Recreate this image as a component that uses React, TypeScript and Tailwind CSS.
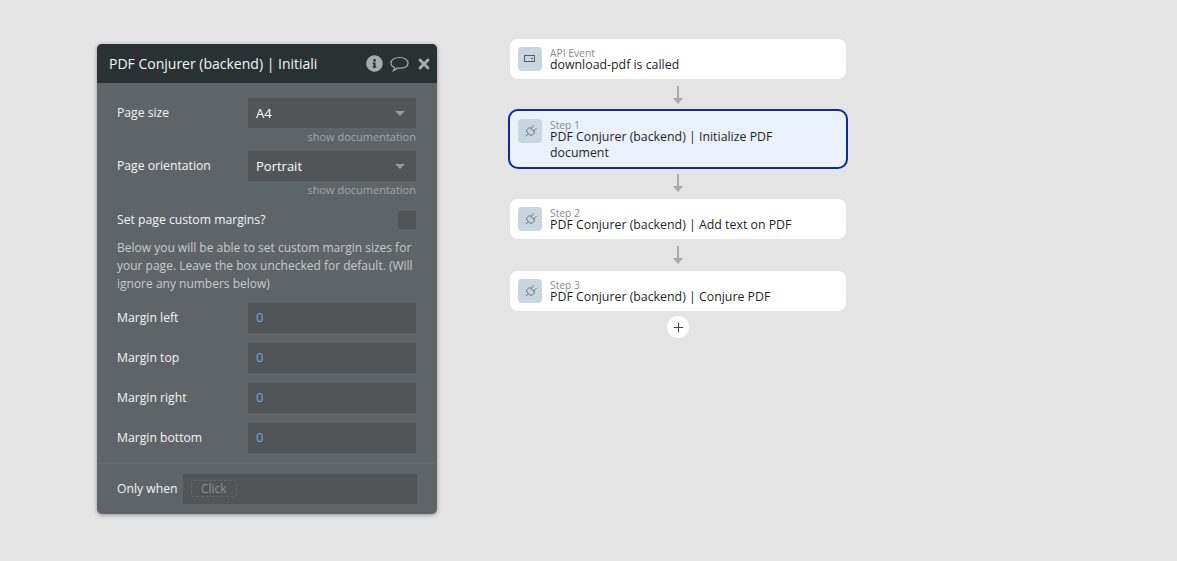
import { Plug, Plus } from "lucide-react";
import { FaInfoCircle, FaTimes } from "react-icons/fa";

const field = "h-[30px] w-[168px] bg-[#515558]";
const label = "text-[12.2px] font-medium text-[#f4f5f5]";
const docs = "h-[23px] pt-[2px] text-right text-[11px] leading-[14px] text-[#a3a7aa]";

function Dropdown({ value }: { value: string }) {
  return (
    <div className={`${field} flex items-center justify-between pl-2 pr-[11px] pt-px text-[13px] text-white`}>
      <span>{value}</span>
      <span className="h-0 w-0 border-x-[5px] border-t-[5px] border-x-transparent border-t-[#989b9e]" />
    </div>
  );
}

function MarginRow({ text }: { text: string }) {
  return (
    <div className="flex items-center justify-between">
      <span className={label}>{text}</span>
      <div className={`${field} flex items-center pl-2 text-[13px] text-[#6fa8dc]`}>0</div>
    </div>
  );
}

function Arrow() {
  return (
    <div className="flex h-8 items-center justify-center">
      <svg width="10" height="18" viewBox="0 0 10 18" className="text-[#a9a9a9]">
        <path d="M5 0v13" stroke="currentColor" strokeWidth="2" fill="none" />
        <path d="M0 12h10l-5 6z" fill="currentColor" />
      </svg>
    </div>
  );
}

function StepIcon({ api }: { api?: boolean }) {
  return (
    <div className="flex h-6 w-6 shrink-0 items-center justify-center rounded-[4px] bg-[#c9d6e2] text-[#52595f]">
      {api ? (
        <svg width="12" height="8" viewBox="0 0 12 8" fill="none" stroke="currentColor">
          <rect x="0.5" y="0.5" width="10" height="6" />
          <path d="M7 3.5h2" />
        </svg>
      ) : (
        <Plug size={15} strokeWidth={1.2} className="rotate-45" />
      )}
    </div>
  );
}

function Card({
  kicker,
  title,
  api,
  selected,
}: {
  kicker: string;
  title: string;
  api?: boolean;
  selected?: boolean;
}) {
  return (
    <div
      className={`flex gap-2 rounded-[8px] pl-2 pr-4 pt-2 ${
        selected ? "bg-[#eaf1fb] outline-2 outline-[#0d2a99] h-14" : "h-10 bg-white"
      }`}
    >
      <StepIcon api={api} />
      <div className="min-w-0">
        <div className="mt-px h-2 text-[10.3px] leading-[10px] text-[#8a8a8a]">{kicker}</div>
        <div className="mt-px text-[12.35px] leading-4 text-[#1f1f1f]">{title}</div>
      </div>
    </div>
  );
}

export default function App() {
  return (
    <div
      className="flex h-[561px] items-start bg-[#e4e4e4]"
      style={{ fontFamily: '"Open Sans", sans-serif' }}
    >
      <div className="ml-[97px] mt-[44px] w-[340px] overflow-hidden rounded-[5px] bg-[#5f6468] shadow-[0_1px_4px_rgba(0,0,0,0.35)]">
        <div className="flex h-[39px] items-center justify-between bg-[#2a3133] pl-3 pr-[5px]">
          <span className="text-[14px] text-[#f4f5f5]">PDF Conjurer (backend) | Initiali</span>
          <div className="flex items-center gap-[7px] text-[#a5abae]">
            <FaInfoCircle size={17} />
            <svg width="19" height="16" viewBox="0 0 19 16" fill="none" stroke="currentColor" strokeWidth="1.2">
              <path d="M9.5 1.5c4.5 0 8.500 2 8.500 5.500s-4 5.200-8.500 5.200c-.8 0-1.500 0-2.200-.2-1 1-2.200 2-3.800 2.600.6-.9 1-1.900 1-3.200C2.300 10.600 1 9 1 7c0-3.500 4-5.500 8.500-5.500z" />
            </svg>
            <FaTimes size={16} />
          </div>
        </div>

        <div className="pl-5 pr-[21px] pt-[15px]">
          <div className="flex justify-between">
            <span className={`${label} pt-[6px]`}>Page size</span>
            <Dropdown value="A4" />
          </div>
          <div className={docs}>show documentation</div>
          <div className="flex justify-between">
            <span className={`${label} pt-[6px]`}>Page orientation</span>
            <Dropdown value="Portrait" />
          </div>
          <div className={docs}>show documentation</div>

          <div className="mt-[7px] flex items-start justify-between">
            <span className={`${label} leading-[18px]`}>Set page custom margins?</span>
            <div className="h-[18px] w-[18px] bg-[#515558]" />
          </div>

          <p className="mt-[10px] text-[12px] leading-[18px] text-[#c9cbcd]">
            Below you will be able to set custom margin sizes for your page. Leave the box unchecked for default. (Will
            ignore any numbers below)
          </p>

          <div className="mt-[10px] flex flex-col gap-[10px]">
            <MarginRow text="Margin left" />
            <MarginRow text="Margin top" />
            <MarginRow text="Margin right" />
            <MarginRow text="Margin bottom" />
          </div>
        </div>

        <div className="mt-[10px] flex h-[51px] items-center border-t border-[#676c70] pl-5 pr-5">
          <span className={`${label} w-[66px] shrink-0`}>Only when</span>
          <div className="flex h-[30px] flex-1 items-center bg-[#515558] pl-2">
            <span className="-mt-px rounded-[3px] border border-dashed border-[#62676a] px-[9px] text-[12px] leading-[15px] text-[#8d9194]">
              Click
            </span>
          </div>
        </div>
      </div>

      <div className="ml-[73px] mt-[39px] flex w-[336px] flex-col">
        <Card kicker="API Event" title="download-pdf is called" api />
        <Arrow />
        <Card kicker="Step 1" title="PDF Conjurer (backend) | Initialize PDF document" selected />
        <Arrow />
        <Card kicker="Step 2" title="PDF Conjurer (backend) | Add text on PDF" />
        <Arrow />
        <Card kicker="Step 3" title="PDF Conjurer (backend) | Conjure PDF" />
        <div className="mt-[5px] flex justify-center">
          <div className="flex h-[22px] w-[22px] items-center justify-center rounded-full bg-white text-[#444]">
            <Plus size={15} strokeWidth={1.6} />
          </div>
        </div>
      </div>
    </div>
  );
}
